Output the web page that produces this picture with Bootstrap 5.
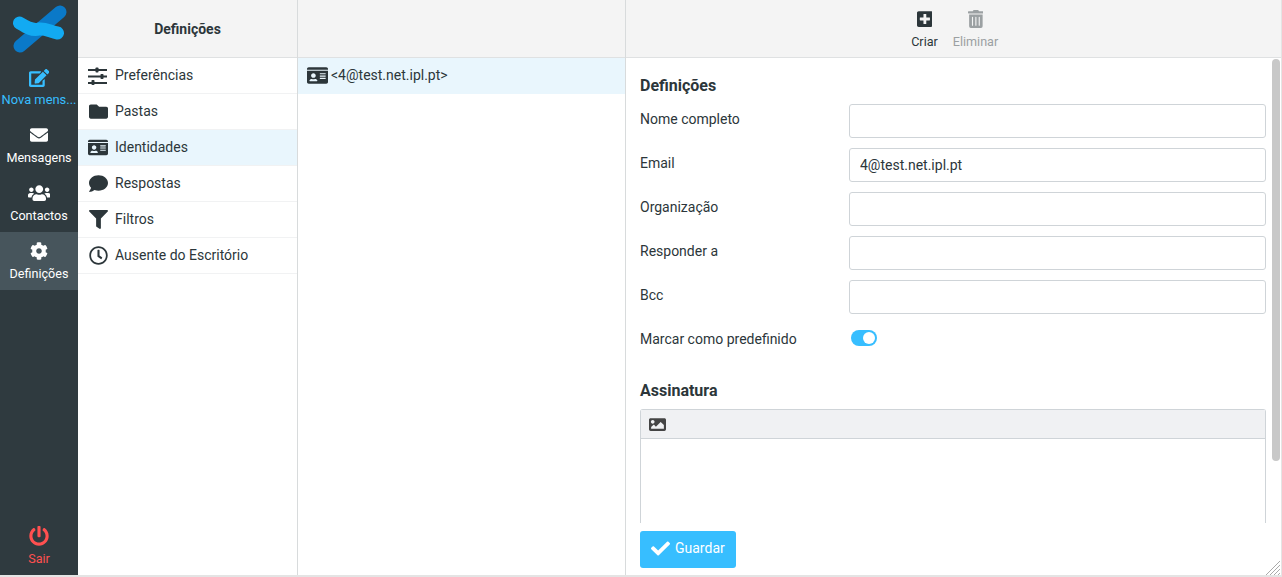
<!DOCTYPE html>
<html lang="pt">
<head>
<meta charset="utf-8">
<title>Definições</title>
<link rel="stylesheet" href="https://cdn.jsdelivr.net/npm/bootstrap@5.3.0/dist/css/bootstrap.min.css">
<style>
html,body{height:577px;overflow:hidden}
body{background:#e4e4e4;font-family:Roboto,"Liberation Sans",sans-serif;font-size:14px;color:#2c363a;padding:0 1px 2px 0}
svg{fill:currentColor;display:block}
.shell{height:575px;background:#fff}
.rail{width:78px;background:#2f3a3f;color:#fff}
.rail-logo{height:58px}
.rail-item{height:58px;font-size:12.6px;line-height:15px;color:#fff;text-decoration:none;padding-top:10px}
.rail-item .lbl{display:block;width:78px;text-align:center;white-space:nowrap;margin-top:6px}
.rail-item svg{height:18px;margin:0 auto}
.rail-new{padding-top:11px;font-size:12.9px}
.rail-new .lbl{margin-top:5px}
.rail-new,.rail-new:hover{color:#37beff}
.rail-active{background:#47555c}
.rail-out,.rail-out:hover{color:#ff5050;height:58px;padding-top:9px}
.rail-out svg{height:20px}
.rail-out .lbl{margin-top:5px}
.pane-a{width:220px;border-right:1px solid #d8dbdc}
.pane-b{width:328px;border-right:1px solid #d8dbdc}
.pane-head{height:58px;background:#f4f4f4;border-bottom:1px solid #dfe1e2;flex:none}
.pane-title{font-weight:700;font-size:14px;padding-top:1px}
.list-group-flush .side-row,.list-group-flush .side-row:last-child{height:36px;padding:0 0 0 10px;border:0;border-bottom:1px solid #f1f2f3;border-radius:0;color:#2c363a;gap:7px;background:transparent}
.list-group-flush .side-row.is-on{background:#e9f6fd}
.ico-box{width:20px;display:flex;justify-content:center;flex:none}
.id-row{height:36px;padding:0 0 2px 9px;background:#e9f6fd;gap:3px;font-size:14px}
.tool{width:51px;font-size:12.6px;line-height:14px;text-align:center;color:#2c363a;padding-top:10px}
.tool svg{height:18px;margin:0 auto 7px}
.tool-off{color:#9ba0a2}
.tools{padding-right:7px}
.pane-c{position:relative;min-width:0}
.form-wrap{height:465px;overflow:hidden;padding:0 15px 0 14px}
.sec-h{font-size:16px;font-weight:700;line-height:19px;margin:0;color:#2c363a}
.fld{height:34px;margin-bottom:10px}
.fld-lab{width:209px;flex:none;line-height:20px;align-self:flex-start;padding-top:5px;margin:0}
.fld .form-control{height:34px;font-size:14px;padding:4px 10px;color:#2c363a;border-color:#cfd4d8;border-radius:3px;flex:1}
.form-switch.sw{padding:0;margin:0;min-height:0;height:16px}
.form-switch.sw .form-check-input{width:26px;height:16px;margin:0 0 0 2px;background-color:#37beff;border:0;float:none;display:block}
.editor{border:1px solid #cfd4d8;border-bottom:0;border-radius:3px 3px 0 0;height:114px}
.ed-bar{height:29px;background:#f0f1f3;border-bottom:1px solid #cfd4d8;padding-left:8px;color:#444}
.foot{height:52px;padding:8px 14px 0}
.btn-save{background:#37beff;border:0;color:#fff;width:96px;height:37px;font-size:14px;border-radius:3px;padding:0 0 2px 11px;gap:5px}
.thumb{position:absolute;top:1px;right:1px;width:8px;height:402px;background:#c8c8c8;border-radius:4px}
.grip{position:absolute;right:1px;bottom:0;width:15px;height:15px;stroke:#aaa;fill:none}
</style>
</head>
<body>
<div class="shell d-flex">
  <nav class="rail d-flex flex-column flex-none">
    <div class="rail-logo d-flex align-items-center justify-content-center">
      <svg width="56" height="50" viewBox="0 0 56 50" style="fill:none"><path d="M9 42L49 8" stroke="#0a79c8" stroke-width="13" stroke-linecap="round"/><path d="M8.500 19C15 23 21 27 28 25C34 24 40 28 46.500 29" stroke="#12aaf2" stroke-width="13" stroke-linecap="round"/></svg>
    </div>
    <a class="rail-item rail-new d-block" href="#"><svg viewBox="0 0 576 512"><path d="M402.6 83.2l90.2 90.2c3.8 3.8 3.8 10 0 13.8L274.4 405.6l-92.8 10.3c-12.4 1.4-22.9-9.1-21.5-21.5l10.3-92.8L388.8 83.2c3.8-3.8 10-3.8 13.8 0zm162-22.9l-48.8-48.8c-15.2-15.2-39.9-15.2-55.2 0l-35.4 35.4c-3.8 3.8-3.8 10 0 13.8l90.2 90.2c3.8 3.8 10 3.8 13.8 0l35.4-35.4c15.2-15.3 15.2-40 0-55.2zM384 346.2V448H64V128h229.8c3.2 0 6.2-1.3 8.5-3.5l40-40c7.6-7.6 2.2-20.5-8.5-20.5H48C21.5 64 0 85.5 0 112v352c0 26.5 21.5 48 48 48h352c26.5 0 48-21.5 48-48V306.2c0-10.7-12.9-16-20.5-8.5l-40 40c-2.2 2.3-3.5 5.3-3.5 8.5z"/></svg><span class="lbl">Nova mens...</span></a>
    <a class="rail-item d-block" href="#"><svg viewBox="0 0 512 512"><path d="M502.3 190.8c3.9-3.1 9.7-.2 9.7 4.7V400c0 26.5-21.5 48-48 48H48c-26.5 0-48-21.5-48-48V195.6c0-5 5.7-7.8 9.7-4.7 22.4 17.4 52.1 39.5 154.1 113.6 21.1 15.4 56.7 47.8 92.2 47.6 35.7.3 72-32.8 92.3-47.6 102-74.1 131.6-96.3 154-113.7zM256 320c23.2.4 56.6-29.2 73.4-41.4 132.7-96.3 142.8-104.7 173.4-128.7 5.8-4.5 9.2-11.5 9.2-18.9v-19c0-26.5-21.5-48-48-48H48C21.5 64 0 85.5 0 112v19c0 7.4 3.4 14.3 9.2 18.9 30.6 23.9 40.7 32.4 173.4 128.7 16.8 12.2 50.2 41.8 73.4 41.4z"/></svg><span class="lbl">Mensagens</span></a>
    <a class="rail-item d-block" href="#"><svg viewBox="0 0 640 512"><path d="M96 224c35.3 0 64-28.7 64-64s-28.7-64-64-64-64 28.7-64 64 28.7 64 64 64zm448 0c35.3 0 64-28.7 64-64s-28.7-64-64-64-64 28.7-64 64 28.7 64 64 64zm32 32h-64c-17.6 0-33.5 7.1-45.1 18.6 40.3 22.1 68.9 62 75.1 109.4h66c17.7 0 32-14.3 32-32v-32c0-35.3-28.7-64-64-64zm-256 0c61.9 0 112-50.1 112-112S381.9 32 320 32 208 82.1 208 144s50.1 112 112 112zm76.8 32h-8.3c-20.8 10-43.9 16-68.5 16s-47.6-6-68.5-16h-8.3C179.6 288 128 339.6 128 403.2V432c0 26.5 21.5 48 48 48h288c26.5 0 48-21.5 48-48v-28.8c0-63.6-51.6-115.2-115.2-115.2zm-223.7-13.4C161.5 263.1 145.6 256 128 256H64c-35.3 0-64 28.7-64 64v32c0 17.7 14.3 32 32 32h65.9c6.3-47.4 34.9-87.3 75.2-109.4z"/></svg><span class="lbl">Contactos</span></a>
    <a class="rail-item rail-active d-block" href="#"><svg viewBox="0 0 512 512"><path d="M487.4 315.7l-42.6-24.6c4.3-23.2 4.3-47 0-70.2l42.6-24.6c4.9-2.8 7.1-8.6 5.5-14-11.1-35.6-30-67.8-54.7-94.6-3.8-4.1-10-5.1-14.8-2.3L380.8 110c-17.9-15.4-38.5-27.3-60.8-35.1V25.8c0-5.6-3.9-10.5-9.4-11.7-36.7-8.2-74.3-7.8-109.2 0-5.5 1.2-9.4 6.1-9.4 11.7V75c-22.2 7.9-42.8 19.8-60.8 35.1L88.7 85.5c-4.9-2.8-11-1.9-14.8 2.3-24.7 26.7-43.6 58.9-54.7 94.6-1.7 5.4.6 11.2 5.5 14L67.3 221c-4.3 23.2-4.3 47 0 70.2l-42.6 24.6c-4.9 2.8-7.1 8.6-5.5 14 11.1 35.6 30 67.8 54.7 94.6 3.8 4.1 10 5.1 14.8 2.3l42.6-24.6c17.9 15.4 38.5 27.3 60.8 35.1v49.2c0 5.6 3.9 10.5 9.4 11.7 36.7 8.2 74.3 7.8 109.2 0 5.5-1.2 9.4-6.1 9.4-11.7v-49.2c22.2-7.9 42.8-19.8 60.8-35.1l42.6 24.6c4.9 2.8 11 1.9 14.8-2.3 24.7-26.7 43.6-58.9 54.7-94.6 1.5-5.5-.7-11.3-5.6-14.1zM256 336c-44.1 0-80-35.9-80-80s35.9-80 80-80 80 35.9 80 80-35.9 80-80 80z"/></svg><span class="lbl">Definições</span></a>
    <a class="rail-item rail-out d-block mt-auto" href="#"><svg viewBox="0 0 512 512"><path d="M400 54.1c63 45 104 118.6 104 201.9 0 136.8-110.8 247.7-247.5 248C120 504.3 8.2 393 8 256.4 7.9 173.1 48.9 99.3 111.8 54.2c11.7-8.3 28-4.8 35 7.7L162.6 90c5.9 10.5 3.1 23.8-6.6 31-41.5 30.8-68 79.6-68 134.9-.1 92.3 74.5 168.1 168 168.1 91.6 0 168.6-74.2 168-169.1-.3-51.8-24.7-101.8-68.1-134-9.7-7.2-12.4-20.5-6.5-30.9l15.8-28.1c7-12.4 23.2-16.1 34.8-7.8zM296 264V24c0-13.3-10.7-24-24-24h-32c-13.3 0-24 10.7-24 24v240c0 13.3 10.7 24 24 24h32c13.3 0 24-10.7 24-24z"/></svg><span class="lbl">Sair</span></a>
  </nav>

  <section class="pane-a d-flex flex-column flex-none">
    <header class="pane-head d-flex align-items-center justify-content-center pane-title">Definições</header>
    <div class="list-group list-group-flush">
      <a class="list-group-item side-row d-flex align-items-center" href="#"><span class="ico-box"><svg width="20" height="18" viewBox="0 0 20 18"><rect x="0" y="2" width="19" height="2"/><rect x="0" y="8.5" width="19" height="2"/><rect x="0" y="15" width="19" height="2"/><rect x="7.5" y="0.5" width="3" height="5" rx=".8"/><rect x="12.5" y="7" width="3" height="5" rx=".8"/><rect x="3.5" y="13" width="3" height="5" rx=".8"/></svg></span>Preferências</a>
      <a class="list-group-item side-row d-flex align-items-center" href="#"><span class="ico-box"><svg width="19" height="19" viewBox="0 0 512 512"><path d="M464 128H272l-64-64H48C21.49 64 0 85.49 0 112v288c0 26.51 21.49 48 48 48h416c26.51 0 48-21.49 48-48V176c0-26.51-21.49-48-48-48z"/></svg></span>Pastas</a>
      <a class="list-group-item side-row is-on d-flex align-items-center" href="#"><span class="ico-box"><svg width="21" height="19" viewBox="0 0 576 512"><path d="M528 32H48C21.5 32 0 53.5 0 80v16h576V80c0-26.5-21.5-48-48-48zM0 432c0 26.5 21.5 48 48 48h480c26.5 0 48-21.5 48-48V128H0v304zm352-232c0-4.4 3.6-8 8-8h144c4.4 0 8 3.6 8 8v16c0 4.4-3.6 8-8 8H360c-4.4 0-8-3.6-8-8v-16zm0 64c0-4.4 3.6-8 8-8h144c4.4 0 8 3.6 8 8v16c0 4.4-3.6 8-8 8H360c-4.4 0-8-3.6-8-8v-16zm0 64c0-4.4 3.6-8 8-8h144c4.4 0 8 3.6 8 8v16c0 4.4-3.6 8-8 8H360c-4.4 0-8-3.6-8-8v-16zM176 192c35.3 0 64 28.7 64 64s-28.7 64-64 64-64-28.7-64-64 28.7-64 64-64zM67.1 396.2C75.5 370.5 99.6 352 128 352h8.2c12.3 5.1 25.7 8 39.8 8s27.6-2.9 39.8-8h8.2c28.4 0 52.5 18.5 60.9 44.2 3.2 9.9-5.2 19.8-15.6 19.8H82.7c-10.4 0-18.8-10-15.6-19.8z"/></svg></span>Identidades</a>
      <a class="list-group-item side-row d-flex align-items-center" href="#"><span class="ico-box"><svg width="19" height="19" viewBox="0 0 512 512"><path d="M256 32C114.6 32 0 125.1 0 240c0 49.6 21.4 95 57 130.7C44.5 421.1 2.7 466 2.2 466.5c-2.2 2.3-2.8 5.7-1.5 8.7S4.8 480 8 480c66.3 0 116-31.8 140.6-51.4 32.7 12.3 69 19.4 107.4 19.4 141.4 0 256-93.1 256-208S397.4 32 256 32z"/></svg></span>Respostas</a>
      <a class="list-group-item side-row d-flex align-items-center" href="#"><span class="ico-box"><svg width="19" height="19" viewBox="0 0 512 512"><path d="M487.976 0H24.028C2.71 0-8.047 25.866 7.058 40.971L192 225.941V432c0 7.831 3.821 15.17 10.237 19.662l80 55.98C298.02 518.69 320 507.493 320 487.98V225.941l184.947-184.97C520.021 25.896 509.338 0 487.976 0z"/></svg></span>Filtros</a>
      <a class="list-group-item side-row d-flex align-items-center" href="#"><span class="ico-box"><svg width="19" height="19" viewBox="0 0 512 512"><path d="M256 8C119 8 8 119 8 256s111 248 248 248 248-111 248-248S393 8 256 8zm0 448c-110.5 0-200-89.5-200-200S145.5 56 256 56s200 89.5 200 200-89.5 200-200 200zm61.8-104.4l-84.9-61.7c-3.1-2.3-4.9-5.9-4.9-9.7V116c0-6.6 5.4-12 12-12h32c6.6 0 12 5.4 12 12v141.7l66.8 48.6c5.4 3.9 6.5 11.4 2.6 16.8L334.6 349c-3.9 5.3-11.4 6.5-16.8 2.6z"/></svg></span>Ausente do Escritório</a>
    </div>
  </section>

  <section class="pane-b d-flex flex-column flex-none">
    <header class="pane-head"></header>
    <div class="id-row d-flex align-items-center"><svg width="21" height="19" viewBox="0 0 576 512"><path d="M528 32H48C21.5 32 0 53.5 0 80v16h576V80c0-26.5-21.5-48-48-48zM0 432c0 26.5 21.5 48 48 48h480c26.5 0 48-21.5 48-48V128H0v304zm352-232c0-4.4 3.6-8 8-8h144c4.4 0 8 3.6 8 8v16c0 4.4-3.6 8-8 8H360c-4.4 0-8-3.6-8-8v-16zm0 64c0-4.4 3.6-8 8-8h144c4.4 0 8 3.6 8 8v16c0 4.4-3.6 8-8 8H360c-4.4 0-8-3.6-8-8v-16zm0 64c0-4.4 3.6-8 8-8h144c4.4 0 8 3.6 8 8v16c0 4.4-3.6 8-8 8H360c-4.4 0-8-3.6-8-8v-16zM176 192c35.3 0 64 28.7 64 64s-28.7 64-64 64-64-28.7-64-64 28.7-64 64-64zM67.1 396.2C75.5 370.5 99.6 352 128 352h8.2c12.3 5.1 25.7 8 39.8 8s27.6-2.9 39.8-8h8.2c28.4 0 52.5 18.5 60.9 44.2 3.2 9.9-5.2 19.8-15.6 19.8H82.7c-10.4 0-18.8-10-15.6-19.8z"/></svg><span>&lt;4@test.net.ipl.pt&gt;</span></div>
  </section>

  <section class="pane-c flex-grow-1 d-flex flex-column">
    <header class="pane-head tools d-flex justify-content-center">
      <div class="tool"><svg viewBox="0 0 448 512"><path d="M400 32H48C21.5 32 0 53.5 0 80v352c0 26.5 21.5 48 48 48h352c26.5 0 48-21.5 48-48V80c0-26.5-21.5-48-48-48zm-32 252c0 6.6-5.4 12-12 12h-92v92c0 6.6-5.4 12-12 12h-56c-6.6 0-12-5.4-12-12v-92H92c-6.6 0-12-5.4-12-12v-56c0-6.6 5.4-12 12-12h92v-92c0-6.6 5.4-12 12-12h56c6.6 0 12 5.4 12 12v92h92c6.6 0 12 5.4 12 12v56z"/></svg>Criar</div>
      <div class="tool tool-off"><svg viewBox="0 0 448 512"><path d="M32 464a48 48 0 0 0 48 48h288a48 48 0 0 0 48-48V128H32zm272-256a16 16 0 0 1 32 0v224a16 16 0 0 1-32 0zm-96 0a16 16 0 0 1 32 0v224a16 16 0 0 1-32 0zm-96 0a16 16 0 0 1 32 0v224a16 16 0 0 1-32 0zM432 32H312l-9.4-18.7A24 24 0 0 0 281.1 0H166.8a23.72 23.72 0 0 0-21.4 13.3L136 32H16A16 16 0 0 0 0 48v32a16 16 0 0 0 16 16h416a16 16 0 0 0 16-16V48a16 16 0 0 0-16-16z"/></svg>Eliminar</div>
    </header>
    <div class="pane-body flex-grow-1 position-relative d-flex flex-column">
      <div class="form-wrap">
        <h2 class="sec-h" style="padding-top:18px;height:46px">Definições</h2>
        <div class="fld d-flex"><label class="fld-lab">Nome completo</label><input class="form-control" type="text"></div>
        <div class="fld d-flex"><label class="fld-lab">Email</label><input class="form-control" type="text" value="4@test.net.ipl.pt"></div>
        <div class="fld d-flex"><label class="fld-lab">Organização</label><input class="form-control" type="text"></div>
        <div class="fld d-flex"><label class="fld-lab">Responder a</label><input class="form-control" type="text"></div>
        <div class="fld d-flex"><label class="fld-lab">Bcc</label><input class="form-control" type="text"></div>
        <div class="fld d-flex align-items-start"><label class="fld-lab">Marcar como predefinido</label><div class="form-check form-switch sw" style="margin-top:6px"><input class="form-check-input" type="checkbox" role="switch" checked></div></div>
        <h2 class="sec-h" style="margin-top:23px;margin-bottom:9px">Assinatura</h2>
        <div class="editor"><div class="ed-bar d-flex align-items-center"><svg width="17" height="17" viewBox="0 0 512 512"><path d="M464 448H48c-26.51 0-48-21.49-48-48V112c0-26.51 21.49-48 48-48h416c26.51 0 48 21.49 48 48v288c0 26.51-21.49 48-48 48zM112 120c-30.928 0-56 25.072-56 56s25.072 56 56 56 56-25.072 56-56-25.072-56-56-56zM64 384h384V272l-87.515-87.515c-4.686-4.686-12.284-4.686-16.971 0L208 320l-55.515-55.515c-4.686-4.686-12.284-4.686-16.971 0L64 328v56z"/></svg></div></div>
      </div>
      <div class="foot"><button class="btn btn-save d-flex align-items-center" type="button"><svg width="19" height="19" viewBox="0 0 512 512"><path d="M173.898 439.404l-166.4-166.4c-9.997-9.997-9.997-26.206 0-36.204l36.203-36.204c9.997-9.998 26.207-9.998 36.204 0L192 312.69 432.095 72.596c9.997-9.997 26.207-9.997 36.204 0l36.203 36.204c9.997 9.997 9.997 26.206 0 36.204l-294.4 294.401c-9.998 9.997-26.207 9.997-36.204-.001z"/></svg>Guardar</button></div>
      <div class="thumb"></div>
      <svg class="grip" viewBox="0 0 15 15"><path d="M15 1L1 15M15 5L5 15M15 9L9 15M15 13L13 15"/></svg>
    </div>
  </section>
</div>
</body>
</html>
